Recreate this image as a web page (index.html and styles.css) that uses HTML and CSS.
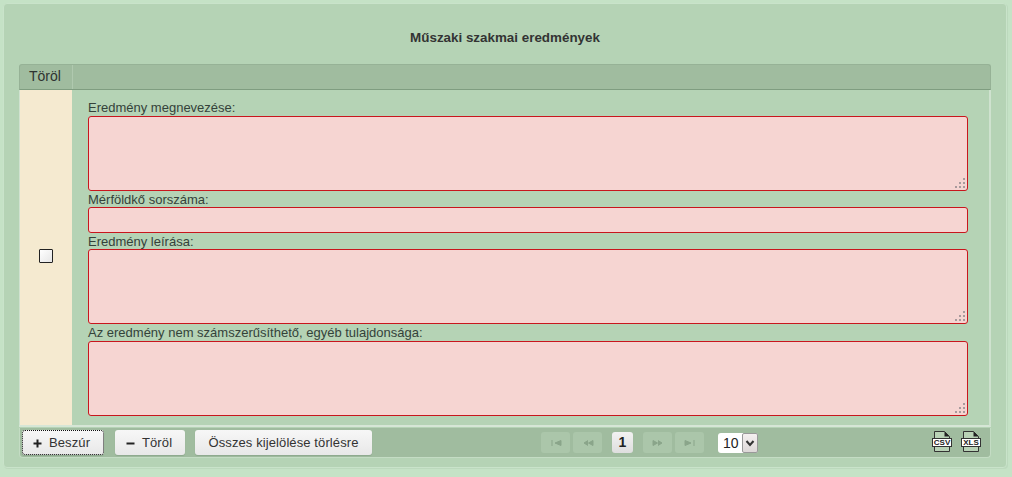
FILE: index.html
```html
<!DOCTYPE html>
<html lang="hu">
<head>
<meta charset="utf-8">
<title>Műszaki szakmai eredmények</title>
<link rel="stylesheet" href="styles.css">
</head>
<body>
<div class="panel">
  <h1 class="title">Műszaki szakmai eredmények</h1>
  <div class="grid">
    <div class="head"><div class="head-cell">Töröl</div></div>
    <div class="row">
      <div class="check-cell"><span class="check"></span></div>
      <div class="fields">
        <label class="lbl">Eredmény megnevezése:</label>
        <div class="ta"><svg class="grip" viewBox="0 0 14 14"><g fill="#a89a9c"><rect x="11" y="1" width="2" height="2"/><rect x="7" y="5" width="2" height="2"/><rect x="11" y="5" width="2" height="2"/><rect x="3" y="9" width="2" height="2"/><rect x="7" y="9" width="2" height="2"/><rect x="11" y="9" width="2" height="2"/></g></svg></div>
        <label class="lbl lbl-low">Mérföldkő sorszáma:</label>
        <div class="inp"></div>
        <label class="lbl lbl-low">Eredmény leírása:</label>
        <div class="ta"><svg class="grip" viewBox="0 0 14 14"><g fill="#a89a9c"><rect x="11" y="1" width="2" height="2"/><rect x="7" y="5" width="2" height="2"/><rect x="11" y="5" width="2" height="2"/><rect x="3" y="9" width="2" height="2"/><rect x="7" y="9" width="2" height="2"/><rect x="11" y="9" width="2" height="2"/></g></svg></div>
        <label class="lbl lbl-tall">Az eredmény nem számszerűsíthető, egyéb tulajdonsága:</label>
        <div class="ta"><svg class="grip" viewBox="0 0 14 14"><g fill="#a89a9c"><rect x="11" y="1" width="2" height="2"/><rect x="7" y="5" width="2" height="2"/><rect x="11" y="5" width="2" height="2"/><rect x="3" y="9" width="2" height="2"/><rect x="7" y="9" width="2" height="2"/><rect x="11" y="9" width="2" height="2"/></g></svg></div>
      </div>
    </div>
    <div class="foot">
      <div class="actions">
        <button class="btn btn-focus"><svg class="ic" viewBox="0 0 9 9"><path d="M3.500 0.500h2v3h3v2h-3v3h-2v-3h-3v-2h3z" fill="#222"/></svg>Beszúr</button>
        <button class="btn btn-torol"><svg class="ic" viewBox="0 0 9 9"><rect x="0.500" y="3.500" width="8" height="2" fill="#222"/></svg>Töröl</button>
        <button class="btn btn-all">Összes kijelölése törlésre</button>
      </div>
      <div class="pager">
        <span class="pg"><svg viewBox="0 0 14 8"><path d="M3 1v6M12 1.500v5L6 4z" fill="#8aa58a" stroke="#8aa58a"/></svg></span>
        <span class="pg"><svg viewBox="0 0 14 8"><path d="M7 1.500 3 4l4 2.500M12 1.500v5L7.500 4z" fill="#8aa58a" stroke="#8aa58a"/></svg></span>
        <span class="pg-cur">1</span>
        <span class="pg"><svg viewBox="0 0 14 8"><path d="M2 1.500v5L6.500 4zM7 1.500 11 4 7 6.500" fill="#8aa58a" stroke="#8aa58a"/></svg></span>
        <span class="pg"><svg viewBox="0 0 14 8"><path d="M2 1.500v5L8 4zM11 1v6" fill="#8aa58a" stroke="#8aa58a"/></svg></span>
        <span class="size"><span class="size-val">10</span><span class="size-arrow"><svg viewBox="0 0 10 8"><path d="M1.500 2 5 6 8.500 2" fill="none" stroke="#333" stroke-width="2"/></svg></span></span>
      </div>
      <div class="exports">
        <span class="doc"><svg class="sheet" viewBox="0 0 16 21"><path d="M0.500 0.500h10l5 5v15h-15z" fill="#b9d2b6" stroke="#333"/><path d="M10.500 0.500v5h5z" fill="#222"/></svg><span class="doc-tag">CSV</span></span>
        <span class="doc"><svg class="sheet" viewBox="0 0 16 21"><path d="M0.500 0.500h10l5 5v15h-15z" fill="#b9d2b6" stroke="#333"/><path d="M10.500 0.500v5h5z" fill="#222"/></svg><span class="doc-tag">XLS</span></span>
      </div>
    </div>
  </div>
</div>
</body>
</html>
```
FILE: styles.css
```css
* { box-sizing: border-box; }
html, body { margin: 0; height: 100%; }
body {
  background: #c5e2c6;
  padding: 3px 5px 9px 3px;
  font-family: "Liberation Sans", Arial, sans-serif;
  font-size: 13px;
  color: #2f3a33;
  overflow: hidden;
}
.panel {
  height: 465px;
  background: #b5d3b5;
  border: 1px solid #c9e3ca;
  border-radius: 4px;
  box-shadow: 1px 1px 0 #bcd9bd;
  padding: 0 15px 8px 15px;
}
.title {
  margin: 0;
  height: 60px;
  padding-top: 26px;
  font-size: 13.400px;
  line-height: 16px;
  font-weight: bold;
  text-align: center;
  color: #333;
}
.grid {
  width: 972px;
  border-radius: 3px;
}
.head {
  height: 26px;
  display: flex;
  background: #a0bc9f;
  border: 1px solid #96b296;
  border-bottom: 1px solid #7f9d80;
  border-radius: 3px 3px 0 0;
}
.head-cell {
  width: 53px;
  border-right: 1px solid #b0c9af;
  padding-left: 9px;
  font-size: 14px;
  line-height: 23px;
  color: #2e3330;
}
.row {
  display: flex;
  height: 337px;
  border-right: 2px solid #cfe2cf;
  border-bottom: 2px solid #d6e6d6;
}
.check-cell {
  width: 53px;
  background: #f5ead0;
  display: flex;
  align-items: center;
  justify-content: center;
  border-left: 1px solid #d0e2d0;
  padding-bottom: 4px;
}
.check {
  width: 14px;
  height: 14px;
  background: linear-gradient(135deg, #fff, #e6e6e6);
  border: 1px solid #222;
  border-radius: 1px;
}
.fields {
  flex: 1;
  padding: 10px 0 0 16px;
  display: flex;
  flex-direction: column;
}
.lbl {
  height: 16px;
  line-height: 16px;
  color: #34423a;
  flex: none;
}
.lbl-low { line-height: 18px; }
.lbl-tall { height: 17px; line-height: 18px; }
.ta, .inp {
  position: relative;
  width: 880px;
  flex: none;
  background: #f6d5d2;
  border: 1px solid #c8161d;
  border-radius: 3px;
}
.ta { height: 75px; }
.inp { height: 26px; }
.grip {
  position: absolute;
  right: 1px;
  bottom: -1px;
  width: 14px;
  height: 14px;
}
.foot {
  height: 30px;
  margin-top: 1px;
  display: flex;
  align-items: center;
  background: #a0bc9f;
  border: 1px solid #c4dcc4;
  border-top: 0;
  border-radius: 0 0 4px 4px;
  padding-left: 2px;
  position: relative;
}
.actions { display: flex; gap: 10px; }
.btn {
  height: 25px;
  padding: 0;
  border: 0;
  border-radius: 3px;
  background: linear-gradient(#f7f7f7, #e8e8e8);
  box-shadow: 0 1px 1px #8da88d;
  font: 13px "Liberation Sans", Arial, sans-serif;
  letter-spacing: 0.1px;
  color: #333;
  display: flex;
  align-items: center;
  white-space: nowrap;
}
.btn-focus { outline: 1px dotted #111; outline-offset: -1px; width: 82px; padding-left: 11px; margin-right: 1px; }
.btn-torol { width: 70px; padding-left: 11px; }
.btn-all { width: 177px; justify-content: center; }
.ic { width: 9px; height: 9px; margin-right: 7px; flex: none; margin-top: 2px; }
.btn-torol .ic { margin-right: 7px; }
.pager {
  position: absolute;
  left: 521px;
  top: 4px;
  display: flex;
  align-items: center;
  gap: 3px;
}
.pg {
  width: 29px;
  height: 21px;
  background: #abc6aa;
  border-radius: 3px;
  display: flex;
  align-items: center;
  justify-content: center;
}
.pg svg { width: 14px; height: 8px; }
.pg-cur {
  width: 21px;
  height: 21px;
  margin: 0 7px;
  background: linear-gradient(#f2f2f2, #dedede);
  border-radius: 3px;
  font-weight: bold;
  font-size: 14px;
  line-height: 21px;
  text-align: center;
  color: #222;
}
.size {
  margin-left: 11px;
  height: 20px;
  width: 40px;
  background: #fff;
  border-radius: 3px;
  display: flex;
  font-size: 14px;
}
.size-val { flex: 1; line-height: 20px; padding-left: 5px; color: #222; }
.size-arrow {
  width: 16px;
  background: linear-gradient(#f5f0f0, #ddd8d8);
  border: 1px solid #999;
  border-radius: 2px;
  display: flex;
  align-items: center;
  justify-content: center;
}
.size-arrow svg { width: 10px; height: 8px; }
.exports {
  position: absolute;
  right: 9px;
  top: 3px;
  display: flex;
  gap: 9px;
}
.doc { position: relative; width: 20px; height: 22px; display: block; padding-left: 2px; }
.sheet { width: 16px; height: 21px; display: block; }
.doc-tag {
  position: absolute;
  left: 0;
  top: 7px;
  width: 20px;
  height: 9px;
  background: #fff;
  border: 1px solid #333;
  font: bold 8px/7px "Liberation Sans", sans-serif;
  text-align: center;
  color: #222;
}
```
